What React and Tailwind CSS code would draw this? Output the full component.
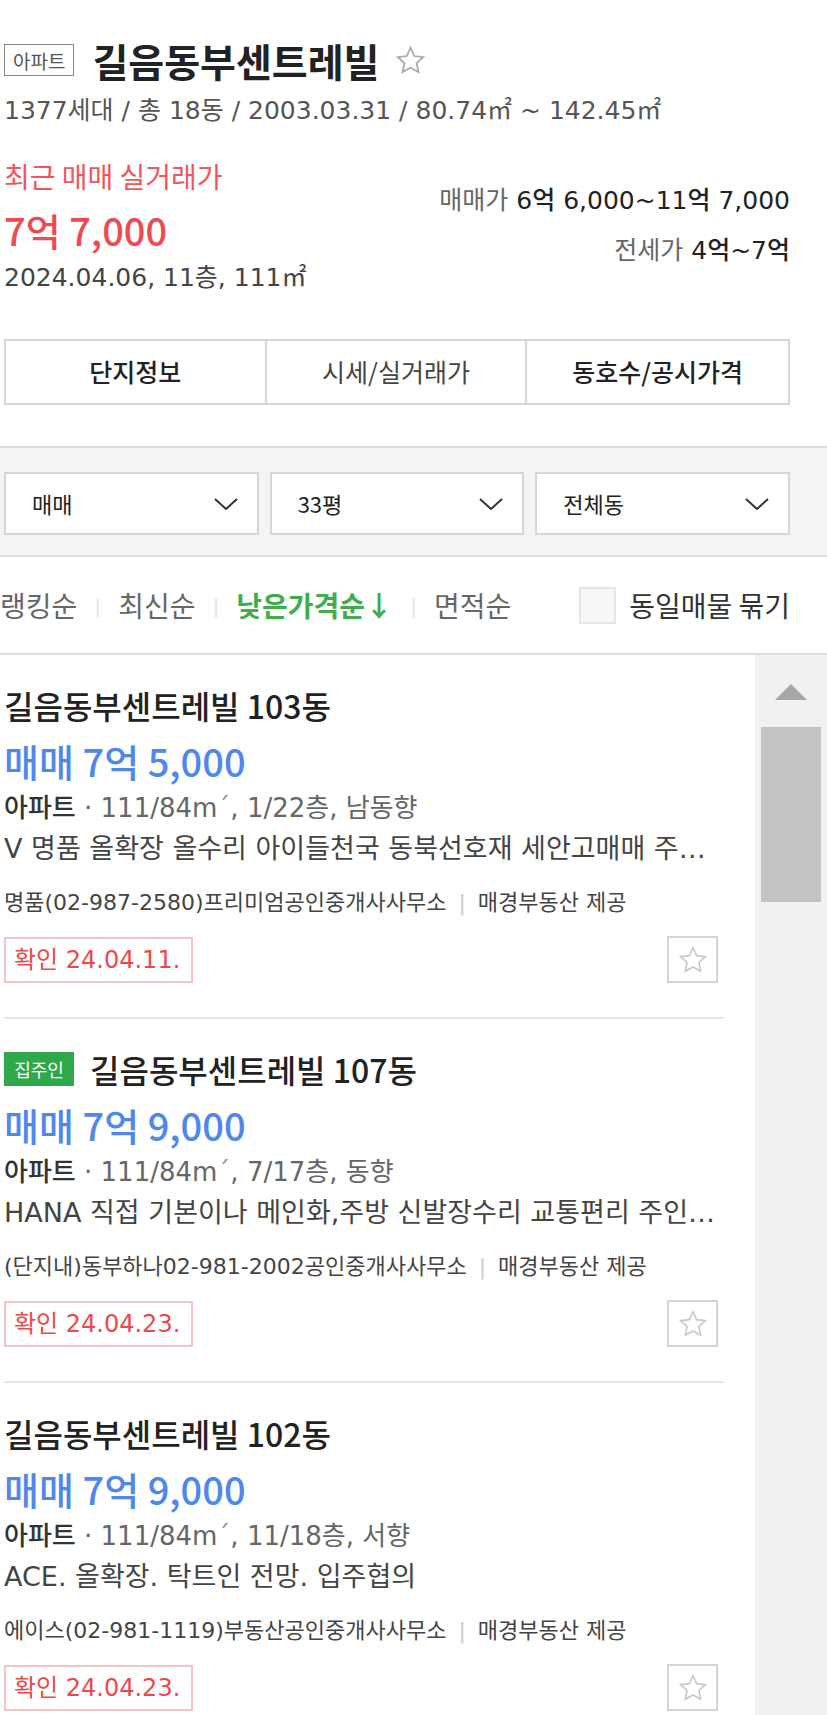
import React from "react";

const Star = ({ className, color = "#bbb", sw = 1.4 }) => (
  <svg viewBox="0 0 24 24" className={className} fill="none" stroke={color} strokeWidth={sw} strokeLinejoin="miter">
    <path d="M12 2.8l2.75 5.95 6.5.75-4.8 4.45 1.3 6.45L12 17.2l-5.75 3.2 1.3-6.45-4.8-4.45 6.5-.75z" />
  </svg>
);

const Chevron = () => (
  <svg viewBox="0 0 26 14" className="w-[26px] h-[14px]" fill="none" stroke="#333" strokeWidth="2">
    <polyline points="2,2 13,12 24,2" />
  </svg>
);

const DJ = "font-['DejaVu_Sans','Noto_Sans_CJK_KR',sans-serif]";

const items = [
  {
    badge: null,
    title: "길음동부센트레빌 103동",
    price: "매매 7억 5,000",
    a: "111/84m",
    b: ", 1/22층, 남동향",
    desc: "V 명품 올확장 올수리 아이들천국 동북선호재 세안고매매 주…",
    realtor: "명품(02-987-2580)프리미엄공인중개사사무소",
    date: "확인 24.04.11.",
  },
  {
    badge: "집주인",
    title: "길음동부센트레빌 107동",
    price: "매매 7억 9,000",
    a: "111/84m",
    b: ", 7/17층, 동향",
    desc: "HANA 직접 기본이나 메인화,주방 신발장수리 교통편리 주인…",
    realtor: "(단지내)동부하나02-981-2002공인중개사사무소",
    date: "확인 24.04.23.",
  },
  {
    badge: null,
    title: "길음동부센트레빌 102동",
    price: "매매 7억 9,000",
    a: "111/84m",
    b: ", 11/18층, 서향",
    desc: "ACE. 올확장. 탁트인 전망. 입주협의",
    realtor: "에이스(02-981-1119)부동산공인중개사사무소",
    date: "확인 24.04.23.",
  },
];

function Item({ it }) {
  return (
    <div className="pt-[30px] pb-[34px] border-b-2 border-[#e6e6e6]">
      <div className="h-[40px] flex items-center">
        {it.badge && (
          <span className="mr-[16px] h-[34px] w-[70px] bg-[#2ea84a] text-white text-[18px] flex items-center justify-center leading-none">
            {it.badge}
          </span>
        )}
        <span className="text-[32px] font-medium text-[#222] leading-none whitespace-nowrap">{it.title}</span>
      </div>
      <div className="mt-[14px] h-[44px] flex items-center text-[38px] font-medium text-[#5087ec] leading-none whitespace-nowrap">
        {it.price}
      </div>
      <div className={`mt-[9px] h-[32px] flex items-center text-[26px] leading-none whitespace-nowrap ${DJ}`}>
        <span className="text-[#333] font-medium">아파트</span>
        <span className="text-[#666]">
          &nbsp;·&nbsp;{it.a}
          <span className="text-[#999]">´</span>
          {it.b}
        </span>
      </div>
      <div className={`mt-[8px] h-[32px] flex items-center text-[27px] text-[#444] leading-none whitespace-nowrap overflow-hidden ${DJ}`}>
        {it.desc}
      </div>
      <div className={`mt-[25px] h-[28px] flex items-center text-[22px] text-[#444] leading-none whitespace-nowrap ${DJ}`}>
        <span>{it.realtor}</span>
        <span className="mx-[12px] text-[#ccc]">|</span>
        <span>매경부동산 제공</span>
      </div>
      <div className="mt-[19px] flex items-center justify-between pr-[6px]">
        <span className={`h-[46px] w-[189px] border-2 border-[#f6c4c4] text-[#ec4a4a] text-[24px] flex items-center pl-[8px] leading-none whitespace-nowrap ${DJ}`}>
          {it.date}
        </span>
        <span className="h-[47px] w-[51px] border-2 border-[#d4d4d4] flex items-center justify-center">
          <Star className="w-[32px] h-[32px]" color="#c8c8c8" sw={1.2} />
        </span>
      </div>
    </div>
  );
}

export default function App() {
  return (
    <div className="w-[827px] h-[1715px] overflow-hidden bg-white font-['Noto_Sans_CJK_KR',sans-serif] text-[#222]">
      {/* header */}
      <div className="pl-[4px] pr-[37px] pt-[40px]">
        <div className="h-[40px] flex items-center">
          <span className="h-[32px] px-[8px] border-[1.5px] border-[#888] text-[19px] text-[#555] flex items-center leading-none">
            아파트
          </span>
          <span className="ml-[18px] text-[39px] font-bold text-[#222] leading-none whitespace-nowrap">길음동부센트레빌</span>
          <Star className="ml-[14px] w-[33px] h-[33px]" color="#aaa" sw={1.3} />
        </div>
        <div className={`mt-[15px] h-[30px] flex items-center text-[25px] text-[#555] leading-none whitespace-nowrap ${DJ}`}>
          1377세대 / 총 18동 / 2003.03.31 / 80.74㎡ ~ 142.45㎡
        </div>
        <div className="mt-[36px] flex justify-between">
          <div>
            <div className="h-[30px] flex items-center text-[28px] text-[#f0565c] leading-none whitespace-nowrap">최근 매매 실거래가</div>
            <div className="mt-[17px] h-[44px] flex items-center text-[38px] font-medium text-[#ec4b52] leading-none whitespace-nowrap">7억 7,000</div>
            <div className={`mt-[10px] h-[30px] flex items-center text-[25px] text-[#444] leading-none whitespace-nowrap ${DJ}`}>2024.04.06, 11층, 111㎡</div>
          </div>
          <div className={`pt-[24px] flex flex-col items-end ${DJ}`}>
            <div className="h-[30px] flex items-center text-[25px] leading-none whitespace-nowrap">
              <span className="text-[#666]">매매가&nbsp;</span>
              <span className="text-[#222] font-medium">6억 6,000~11억 7,000</span>
            </div>
            <div className="mt-[20px] h-[30px] flex items-center text-[25px] leading-none whitespace-nowrap">
              <span className="text-[#666]">전세가&nbsp;</span>
              <span className="text-[#222] font-medium">4억~7억</span>
            </div>
          </div>
        </div>
        <div className="mt-[47px] h-[66px] grid grid-cols-3 border-2 border-[#d6d6d6]">
          <div className="flex items-center justify-center text-[25px] font-medium text-[#222] border-r-2 border-[#d6d6d6]">단지정보</div>
          <div className="flex items-center justify-center text-[25px] text-[#444] border-r-2 border-[#d6d6d6]">시세/실거래가</div>
          <div className="flex items-center justify-center text-[25px] font-medium text-[#222]">동호수/공시가격</div>
        </div>
      </div>

      {/* filter band */}
      <div className="mt-[41px] bg-[#f4f4f4] border-y-2 border-[#dedede] pt-[24px] pb-[20px] pl-[4px] pr-[37px]">
        <div className="grid grid-cols-3 gap-[11px]">
          {["매매", "33평", "전체동"].map((t) => (
            <div key={t} className="h-[63px] bg-white border-2 border-[#d6d6d6] flex items-center justify-between pl-[26px] pr-[18px]">
              <span className="text-[22px] text-[#222]">{t}</span>
              <Chevron />
            </div>
          ))}
        </div>
      </div>

      {/* sort row */}
      <div className="h-[98px] flex items-center justify-between pr-[37px] border-b-2 border-[#dedede]">
        <div className="flex items-center text-[28px] text-[#666] leading-none whitespace-nowrap">
          <span>랭킹순</span>
          <span className="mx-[18px] text-[18px] text-[#ddd]">|</span>
          <span>최신순</span>
          <span className="mx-[18px] text-[18px] text-[#ddd]">|</span>
          <span className="text-[#3fae4a] font-bold">낮은가격순↓</span>
          <span className="mx-[18px] text-[18px] text-[#ddd]">|</span>
          <span>면적순</span>
        </div>
        <div className="flex items-center">
          <span className="w-[37px] h-[37px] border-2 border-[#e6e6e6] bg-[#f7f7f7]"></span>
          <span className="ml-[13px] text-[28px] text-[#333] leading-none whitespace-nowrap">동일매물 묶기</span>
        </div>
      </div>

      {/* list */}
      <div className="flex">
        <div className="flex-1 min-w-0 overflow-hidden pl-[4px] pr-[31px]">
          {items.map((it, i) => (
            <Item key={i} it={it} />
          ))}
        </div>
        <div className="w-[72px] shrink-0 bg-[#f1f1f1] flex flex-col items-center pt-[28px]">
          <svg viewBox="0 0 34 18" className="w-[34px] h-[18px]">
            <polygon points="17,1 33,17 1,17" fill="#a6a6a6" />
          </svg>
          <div className="mt-[26px] w-[60px] h-[175px] bg-[#c3c3c3]"></div>
        </div>
      </div>
    </div>
  );
}
